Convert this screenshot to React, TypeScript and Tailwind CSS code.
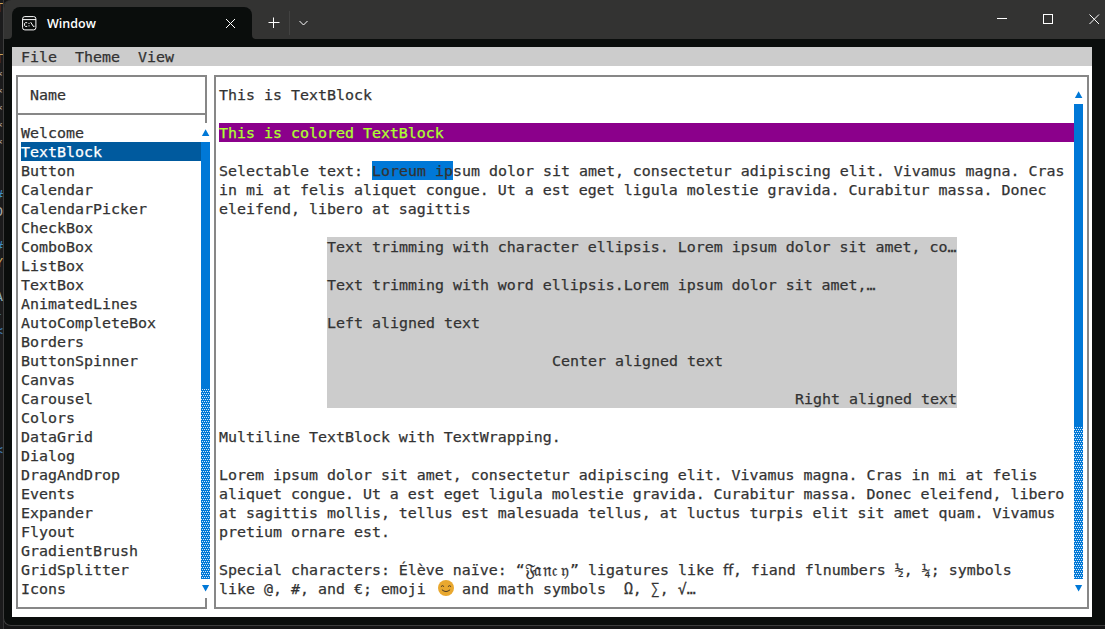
import React from "react";

const controls = [
  "Welcome", "TextBlock", "Button", "Calendar", "CalendarPicker", "CheckBox", "ComboBox", "ListBox",
  "TextBox", "AnimatedLines", "AutoCompleteBox", "Borders", "ButtonSpinner", "Canvas", "Carousel",
  "Colors", "DataGrid", "Dialog", "DragAndDrop", "Events", "Expander", "Flyout", "GradientBrush",
  "GridSplitter", "Icons",
];

const editorGlyphs: [string, string][] = [
  ["T", "text-[#c9a45c]"], ["", ""], ["", ""], ["T", "text-[#c9a45c]"],
  ["*", "text-[#b9b4a8]"], ["*", "text-[#b9b4a8]"], ["*", "text-[#b9b4a8]"], ["*", "text-[#b9b4a8]"], ["*", "text-[#b9b4a8]"],
  ["", ""], ["", ""], ["#", "text-[#3f8cc4]"], ["D", "text-[#a8a8a8]"], ["", ""], ["#", "text-[#3f8cc4]"],
  ["Y", "text-[#c9a45c]"], ["", ""], ["A", "text-[#8fb0c0]"], ["-", "text-[#3f6c94]"], ["<", "text-[#3f7cb4]"],
  ["", ""], ["", ""], ["", ""], ["", ""], ["", ""], ["", ""], ["<", "text-[#3f7cb4]"],
];

function Line({ className = "", children }: { className?: string; children: React.ReactNode }) {
  return <div className={"h-[19px] whitespace-pre leading-[21px] " + className}>{children}</div>;
}

function Arrow({ down = false }: { down?: boolean }) {
  return (
    <svg viewBox="0 0 9 19" className="block h-[19px] w-[9px] shrink-0" fill="#0078d7">
      <path d={down ? "M1 6H8.2L4.6 12.5Z" : "M4.6 6.2L8.4 13H.9Z"} />
    </svg>
  );
}

function ScrollBar({ thumb }: { thumb: string }) {
  return (
    <div className="flex w-[9px] shrink-0 flex-col bg-white">
      <Arrow />
      <div className={"w-full shrink-0 bg-[#0078d7] " + thumb} />
      <svg className="block min-h-0 w-full flex-1" shapeRendering="crispEdges">
        <defs>
          <pattern id="shade" width="2" height="4" patternUnits="userSpaceOnUse">
            <rect width="2" height="4" fill="#0078d7" />
            <rect x="1" y="0" width="1" height="1" fill="#d4e8f9" />
            <rect x="0" y="2" width="1" height="1" fill="#d4e8f9" />
          </pattern>
        </defs>
        <rect width="100%" height="100%" fill="url(#shade)" />
      </svg>
      <Arrow down />
    </div>
  );
}

function TitleBar() {
  return (
    <header className="flex h-[39px] shrink-0 bg-[#333332] text-white">
      <svg className="mt-[35px] ml-1 shrink-0" width="4" height="4" viewBox="0 0 4 4"><path d="M4 0Q4 4 0 4H4Z" fill="#0a0d0c" /></svg>
      <div className="mt-[7px] flex h-8 w-[240px] items-center rounded-t-lg bg-[#0a0d0c] pl-[10px]">
        <svg width="15" height="15" viewBox="0 0 15 15" fill="none" stroke="#fff">
          <rect x=".6" y=".6" width="13.3" height="13.3" rx="2.2" />
          <path d="M1 3.6H14" />
          <path d="M5.2 6.7H3.4L2.6 7.4V9.6L3.4 10.4H5.2M7 6.9V8M7 9.3V10.4M8.7 6.2L11.6 10.8M12 9.8V10.8" />
        </svg>
        <span className="mt-[2px] ml-[10px] font-['Open_Sans',sans-serif] text-[12.5px] font-semibold">Window</span>
        <svg className="ml-auto mr-[16px]" width="11" height="11" viewBox="0 0 11 11" stroke="#fff">
          <path d="M1 1L10 10M10 1L1 10" />
        </svg>
      </div>
      <svg className="mt-[35px] shrink-0" width="4" height="4" viewBox="0 0 4 4"><path d="M0 0Q0 4 4 4H0Z" fill="#0a0d0c" /></svg>
      <svg className="mt-[17px] ml-[12px]" width="12" height="12" viewBox="0 0 12 12" stroke="#fff">
        <path d="M.5 5.5H11.5M5.5 .5V11" />
      </svg>
      <div className="mt-[11px] ml-[9px] h-6 w-px bg-[#424241]" />
      <svg className="mt-[19px] ml-[9px]" width="9" height="8" viewBox="0 0 9 8" fill="none" stroke="#fff">
        <path d="M.5 2L4.5 6L8.5 2" />
      </svg>
      <div className="mt-[13px] ml-auto flex h-3 items-start">
        <svg width="11" height="12" viewBox="0 0 11 12" stroke="#fff"><path d="M0 5.5H10" /></svg>
        <svg className="ml-[35px]" width="11" height="12" viewBox="0 0 11 12" fill="none" stroke="#fff">
          <rect x=".5" y="1.5" width="9" height="9" />
        </svg>
        <svg className="ml-[35px] mr-[6px]" width="11" height="12" viewBox="0 0 11 12" stroke="#fff">
          <path d="M.5 1.5L10 11M10 1.5L.5 11" />
        </svg>
      </div>
    </header>
  );
}

function Sidebar() {
  return (
    <aside className="flex w-[194px] shrink-0 flex-col">
      <div className="mr-[3px] h-10 border-2 border-[#878787] pt-2 pl-3"><Line>Name</Line></div>
      <div className="flex min-h-0 flex-1">
        <div className="w-[2px] bg-[#878787]" />
        <div className="flex min-w-0 flex-1 flex-col">
          <div className="mr-[3px] h-2 border-r-2 border-[#878787]" />
          <div className="flex h-[475px] pl-[3px]">
            <div className="flex-1">
              {controls.map((name) => (
                <Line key={name} className={name === "TextBlock" ? "bg-[#005a9e] text-white" : ""}>{name}</Line>
              ))}
            </div>
            <ScrollBar thumb="h-[247px]" />
          </div>
          <div className="mr-[3px] h-[11px] border-r-2 border-b-2 border-[#878787]" />
        </div>
      </div>
    </aside>
  );
}

function Content() {
  return (
    <main className="ml-1 flex w-[875px] shrink-0 border-2 border-[#878787] pt-2 pb-[9px] pl-[3px]">
      <div className="w-[855px] shrink-0">
        <Line>This is TextBlock</Line>
        <Line className="mt-[19px] bg-[#8b008b] text-[#adff2f]">This is colored TextBlock</Line>
        <Line className="mt-[19px] flex">
          <span className="w-[153px]">Selectable text: </span>
          <span className="w-[81px] bg-[#0078d7]">Loreum ip</span>
          <span>sum dolor sit amet, consectetur adipiscing elit. Vivamus magna. Cras</span>
        </Line>
        <Line>in mi at felis aliquet congue. Ut a est eget ligula molestie gravida. Curabitur massa. Donec</Line>
        <Line>eleifend, libero at sagittis</Line>
        <div className="mt-[19px] ml-[108px] flex w-[630px] flex-col gap-[19px] bg-[#cccccc]">
          <Line>Text trimming with character ellipsis. Lorem ipsum dolor sit amet, co…</Line>
          <Line>Text trimming with word ellipsis.Lorem ipsum dolor sit amet,…</Line>
          <Line>Left aligned text</Line>
          <Line className="pl-[225px]">Center aligned text</Line>
          <Line className="text-right">Right aligned text</Line>
        </div>
        <Line className="mt-[19px]">Multiline TextBlock with TextWrapping.</Line>
        <Line className="mt-[19px]">Lorem ipsum dolor sit amet, consectetur adipiscing elit. Vivamus magna. Cras in mi at felis</Line>
        <Line>aliquet congue. Ut a est eget ligula molestie gravida. Curabitur massa. Donec eleifend, libero</Line>
        <Line>at sagittis mollis, tellus est malesuada tellus, at luctus turpis elit sit amet quam. Vivamus</Line>
        <Line>pretium ornare est.</Line>
        <Line className="mt-[19px] flex">
          <span className="w-[306px]">Special characters: Élève naïve: “</span>
          <span className="grid w-[45px] grid-cols-5 text-[17px] tracking-normal">
            <span>𝔉</span><span>𝔞</span><span>𝔫</span><span>𝔠</span><span>𝔶</span>
          </span>
          <span>” ligatures like ﬀ, fiand flnumbers ½, ¼; symbols</span>
        </Line>
        <Line className="flex">
          <span className="w-[216px]">like @, #, and €; emoji </span>
          <svg className="ml-[2px] mr-[7px]" width="18" height="18" viewBox="0 0 18 18" fill="none" stroke="#4b3a25" strokeLinecap="round">
            <circle cx="9" cy="9" r="8" fill="#e9a82f" stroke="none" />
            <path d="M4.2 7.3Q5.5 5.7 6.8 7.3M11.2 7.3Q12.5 5.7 13.8 7.3M5.2 11Q9 14.3 12.8 11" />
          </svg>
          <span>and math symbols  Ω, ∑, √…</span>
        </Line>
      </div>
      <ScrollBar thumb="h-[323px]" />
    </main>
  );
}

export default function App() {
  return (
    <div className="flex h-[629px] w-[1105px] overflow-hidden bg-[#151516]">
      <div className="flex w-[4px] shrink-0 flex-col items-end overflow-hidden border-r border-[#343435] bg-[#1b1b1c] font-['DejaVu_Sans_Mono',monospace] text-[13px]">
        {editorGlyphs.map(([glyph, color], i) => (
          <span key={i} className={"h-[17px] shrink-0 leading-[15px] " + color}>{glyph}</span>
        ))}
      </div>
      <div className="mb-[3px] -ml-px flex w-[1103px] shrink-0 flex-col overflow-hidden rounded-l-lg border-b border-l border-[#3d3d3d] bg-[#0a0d0c]">
        <TitleBar />
        <div className="mt-2 ml-2 flex h-[570px] w-[1080px] flex-col bg-white font-['DejaVu_Sans_Mono',monospace] text-[14.95px] text-[#333333] [-webkit-text-stroke:0.25px]">
          <nav className="flex h-[19px] shrink-0 gap-[18px] bg-[#cccccc] pl-[9px]">
            <Line>File</Line><Line>Theme</Line><Line>View</Line>
          </nav>
          <div className="mt-[9px] ml-1 flex h-[534px]">
            <Sidebar />
            <Content />
          </div>
        </div>
      </div>
    </div>
  );
}
